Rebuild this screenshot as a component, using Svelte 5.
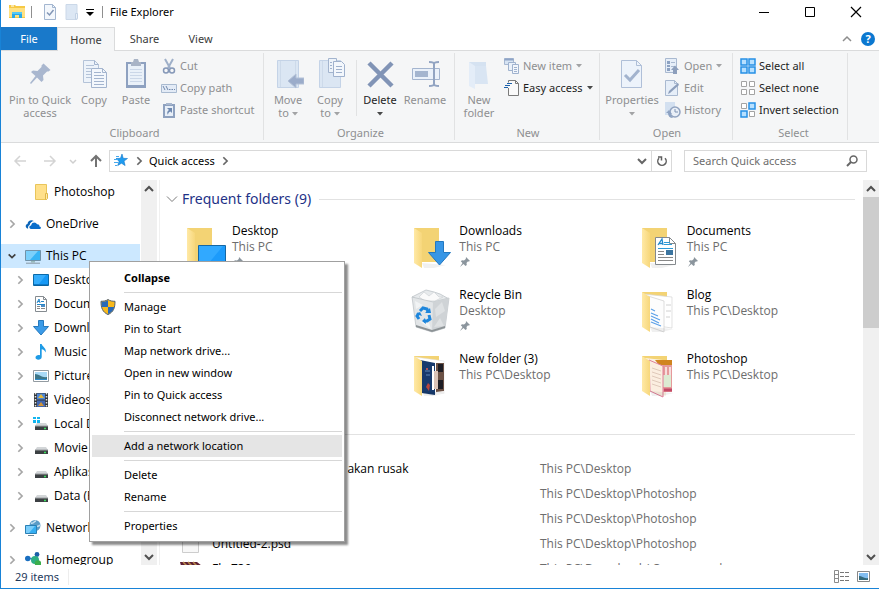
<script>
  const tree = [
    { label: 'Photoshop', icon: 'folder', level: 2, leaf: true },
    { label: 'OneDrive', icon: 'onedrive', level: 1, gap: true },
    { label: 'This PC', icon: 'pc', level: 1, gap: true, selected: true },
    { label: 'Desktop', icon: 'desktop', level: 2 },
    { label: 'Documents', icon: 'document', level: 2 },
    { label: 'Downloads', icon: 'download', level: 2 },
    { label: 'Music', icon: 'music', level: 2 },
    { label: 'Pictures', icon: 'picture', level: 2 },
    { label: 'Videos', icon: 'video', level: 2 },
    { label: 'Local Disk (C:)', icon: 'sysdrive', level: 2 },
    { label: 'Movie (D:)', icon: 'drive', level: 2 },
    { label: 'Aplikasi (E:)', icon: 'drive', level: 2 },
    { label: 'Data (F:)', icon: 'drive', level: 2 },
    { label: 'Network', icon: 'network', level: 1, gap: true },
    { label: 'Homegroup', icon: 'homegroup', level: 1, gap: true }
  ];

  const folders = [
    { name: 'Desktop', place: 'This PC', art: 'desktop', pinned: true },
    { name: 'Downloads', place: 'This PC', art: 'downloads', pinned: true },
    { name: 'Documents', place: 'This PC', art: 'documents', pinned: true },
    { name: 'Pictures', place: 'This PC', art: 'plain', pinned: true },
    { name: 'Recycle Bin', place: 'Desktop', art: 'bin', pinned: true },
    { name: 'Blog', place: 'This PC\\Desktop', art: 'blog' },
    { name: 'Data', place: 'This PC\\Desktop', art: 'plain' },
    { name: 'New folder (3)', place: 'This PC\\Desktop', art: 'photos' },
    { name: 'Photoshop', place: 'This PC\\Desktop', art: 'cards' }
  ];

  const files = [
    { name: 'Jika tidak dirawat, cepat akan rusak', place: 'This PC\\Desktop', art: 'page' },
    { name: 'Untitled-4.psd', place: 'This PC\\Desktop\\Photoshop', art: 'page' },
    { name: 'Untitled-3.psd', place: 'This PC\\Desktop\\Photoshop', art: 'page' },
    { name: 'Untitled-2.psd', place: 'This PC\\Desktop\\Photoshop', art: 'page' },
    { name: 'Fla 730', place: 'This PC\\Downloads\\Compressed', art: 'archive' }
  ];

  const menu = [
    [{ label: 'Collapse', bold: true }],
    [
      { label: 'Manage', shield: true },
      { label: 'Pin to Start' },
      { label: 'Map network drive...' },
      { label: 'Open in new window' },
      { label: 'Pin to Quick access' },
      { label: 'Disconnect network drive...' }
    ],
    [{ label: 'Add a network location', active: true }],
    [{ label: 'Delete' }, { label: 'Rename' }],
    [{ label: 'Properties' }]
  ];
</script>

{#snippet small(name)}
  <svg class="i16" viewBox="0 0 16 16" aria-hidden="true">
    {#if name === 'folder'}
      <path d="M2.5 .5h11v15h-11z" fill="#ffe08a" stroke="#e9c55a" /><path d="M12.5 9.5h2v5l-1 1h-1z" fill="#ffe9a8" stroke="#e0b848" />
    {:else if name === 'onedrive'}
      <path d="M3.200 12.600C.4 12.400-.3 8.800 2.500 8c.2-3 3.800-5.200 6.500-2.800C6.500 5.300 4.800 7 4.700 9c-1.400.5-1.900 2.300-1.500 3.600z" fill="#0a64b8" />
      <path d="M6 13c-2.300-.2-2.200-3.300.1-3.500.1-3.400 4.600-4.300 6-1.200 1.600-.2 2.500.8 2.400 2.100 2 .2 1.900 2.600 0 2.600z" fill="#0a6ecb" />
      <path d="M5.600 9C5.900 5.400 10.500 4.600 12.300 7.600" fill="none" stroke="#fff" stroke-width=".8" />
    {:else if name === 'pc'}
      <path d="M.5 2.500h15v10H.5z" fill="#36b4f5" stroke="#7192a8" /><path d="M1 3h12L5 12H1z" fill="#7bd0fb" /><path d="M6 13h4v1.500H6z" fill="#9bb" /><path d="M1 15.200h14" stroke="#8797a3" />
    {:else if name === 'desktop'}
      <path d="M.5 2.500h15v11H.5z" fill="#1698f5" stroke="#0b6aa8" /><path d="M1 3h12L6 12H1z" fill="#35adfc" /><path d="M1 13h14" stroke="#075b98" />
    {:else if name === 'document'}
      <path d="M2.500.5h8l3 3v12h-11z" fill="#fff" stroke="#858b90" /><path d="M10.500.5v3h3" fill="none" stroke="#858b90" />
      <path d="M4 7l2-4 1 4M4.500 5.500h2M8 5.500h3M4 8.500h8" stroke="#2586c8" fill="none" /><path d="M4 10.500h3M4 12.500h3M8 12.500h4" stroke="#888" /><path d="M8 9h4v2H8z" fill="#4b8dc6" />
    {:else if name === 'download'}
      <path d="M5.500.5h5v6h5L8 15 .5 6.500h5z" fill="#3b9be8" stroke="#2679bd" />
    {:else if name === 'music'}
      <path d="M7 0h1.700c.2 2.600 5.300 4 3.800 8.500-.5-2-2-3-3.800-3.200V13c0 3.300-6.200 3.600-6.200.6 0-2.200 2.700-3.200 4.500-2.300z" fill="#1e9be6" />
    {:else if name === 'picture'}
      <path d="M.5 2.500h15v11H.5z" fill="#fff" stroke="#939ba1" /><path d="M2 4h12v8H2z" fill="#a9daf7" /><path d="M2 6c4 0 7 4 12 3v3H2z" fill="#3d7688" /><path d="M2 11h12v1H2z" fill="#2f8bc9" />
    {:else if name === 'video'}
      <path d="M1 1h14v14H1z" fill="#33363a" /><path d="M2.500 1v14M13.500 1v14" stroke="#dfe3e6" stroke-width="1.500" stroke-dasharray="1.500 1.500" />
      <path d="M4 1.500h8v6H4z" fill="#4d86d6" /><path d="M4 8.500h8V15H4z" fill="#4166b0" /><path d="M5 6l3-4 3 4z" fill="#e0b83a" /><path d="M5 14l3-4 3 4z" fill="#d29539" />
    {:else if name === 'drive' || name === 'sysdrive'}
      <path d="M4 7h9l2 3H2z" fill="#d3d6d8" /><path d="M2 10h13v4H2z" fill="#3c4043" /><path d="M2 10h13" stroke="#9da1a4" /><path d="M11 12.500h2" stroke="#39e05c" stroke-width="1.500" />
      {#if name === 'sysdrive'}<path d="M0 1h3v2H0zM4 1h3v2H4zM0 4h3v3H0zM4 4h3v3H4z" fill="#12b5ef" />{/if}
    {:else if name === 'network'}
      <circle cx="10" cy="5.500" r="5.500" fill="#5b9cc8" /><path d="M6 3c3 1 3-2 5-2M8 9c1-4 5-1 7-4" stroke="#c5dfee" fill="none" stroke-width="1.500" />
      <path d="M.5 5.500h11v8H.5z" fill="#35aef2" stroke="#2a80b5" /><path d="M1 6h9l-6 7H1z" fill="#7acdfb" /><path d="M3 15.500h6" stroke="#6b8799" />
    {:else if name === 'homegroup'}
      <path d="M3 7l7-1 2-4M10 8l3 4" stroke="#2f83cc" fill="none" /><circle cx="2.800" cy="6.500" r="2.800" fill="#1a6fc0" /><circle cx="12" cy="2.500" r="2.400" fill="#1a5fa8" /><circle cx="10" cy="8" r="4" fill="#2cae84" /><circle cx="13" cy="11.500" r="3.200" fill="#3cae4c" />
    {:else if name === 'cut'}
      <path d="M4 1l5 9M12 1L7 10" stroke="#9fb0c9" stroke-width="2" fill="none" /><circle cx="5" cy="12.500" r="2.500" fill="none" stroke="#8598b8" stroke-width="1.500" /><circle cx="11" cy="12.500" r="2.500" fill="none" stroke="#8598b8" stroke-width="1.500" />
    {:else if name === 'path'}
      <path d="M.5 4.500h15v8H.5z" fill="#e3ebf6" stroke="#a9bad0" /><path d="M2 6l2 4M5 6l2 4M8 9.500h1.500M10.500 9.500H12M13 9.500h1" stroke="#7189ad" fill="none" />
    {:else if name === 'shortcut'}
      <path d="M2 2h12v14H2z" fill="#8ea1bf" /><path d="M4 4h8v10H4z" fill="#e8eff8" /><path d="M5 1h6v2H5z" fill="#a9b8cf" /><path d="M6 6h5v5L9.500 9.500Q7 10 7 13 5 10 8 8z" fill="#6f89b0" />
    {:else if name === 'newitem'}
      <path d="M.5.5h9v6h-9z" fill="#d7e4f3" stroke="#a7b8d2" /><path d="M.5 1.500h9" stroke="#8ea4c6" stroke-width="2" /><path d="M4.500 4.500h7v8h-7z" fill="#eaf1fa" stroke="#9fb2ce" /><path d="M8.500 6.500h6v9h-6z" fill="#f2f6fc" stroke="#9fb2ce" /><path d="M10 9.500h3M10 11.500h3M10 13.500h3" stroke="#9fb2ce" />
    {:else if name === 'easy'}
      <path d="M4.500.500h7l3 3v12h-10z" fill="#fafafa" /><path d="M4.500 8v7.500h10v-12l-3-3h-7v2M11.500.5v3h3" fill="none" stroke="#7b7b7b" /><path d="M3 3.500h5M1 5.500h5M0 7.500h4" stroke="#1e62ab" />
    {:else if name === 'open'}
      <path d="M.500.500h11v14h-11z" fill="#e6eef8" stroke="#a9b9d0" /><path d="M2 3h3v3H2zM2 7h3v2H2zM2 10h3v3H2z" fill="#8da2c2" /><path d="M6 4.500h4M6 8.500h4" stroke="#a9b9d0" /><path d="M8 16v-4H6l4-4.500 4 4.500h-2v4z" fill="#8d9fbc" />
    {:else if name === 'edit'}
      <path d="M.500.500h9l3 3v12H.5z" fill="#e6eef8" stroke="#a9b9d0" /><path d="M9.500.5v3h3" fill="none" stroke="#a9b9d0" /><path d="M3 14l1-3 9-8 1 2-9 8z" fill="#8d9fbc" />
    {:else if name === 'history'}
      <path d="M0 0h10v13H0z" fill="#d3e0f0" /><circle cx="10" cy="10" r="5" fill="#e9eff7" stroke="#91a3c0" stroke-width="1.500" /><path d="M10 7v3h3" fill="none" stroke="#7f93b3" /><path d="M1 11l3-3 3 4H5l3 4Q3 16 3 11z" fill="#8da2c2" />
    {:else if name === 'all'}
      <path d="M1 1h6v6H1zM9 1h6v6H9zM1 9h6v6H1zM9 9h6v6H9z" fill="#b7e0ff" stroke="#2690e6" stroke-width="1.500" />
    {:else if name === 'none'}
      <path d="M1.500 1.500h5v5h-5zM9.500 1.500h5v5h-5zM1.500 9.500h5v5h-5zM9.500 9.500h5v5h-5z" fill="#fff" stroke="#a3a3a3" />
    {:else if name === 'invert'}
      <path d="M1.500 1.500h5v5h-5zM9.500 9.500h5v5h-5z" fill="#fff" stroke="#a3a3a3" /><path d="M9 1h6v6H9zM1 9h6v6H1z" fill="#b7e0ff" stroke="#2690e6" stroke-width="1.500" />
    {:else if name === 'explorer'}
      <path d="M0 1h6l1 1h9v12H0z" fill="#f6c945" /><path d="M0 4h16v9H0z" fill="#ffe183" /><path d="M2 2h3" stroke="#fff" /><path d="M3 14V8h10v6h-3v-3H6v3z" fill="#2aa9e8" /><path d="M3 8h10v2H3z" fill="#55c8f5" />
    {:else if name === 'props'}
      <path d="M2.500.500h8l3 3v12h-11z" fill="#f3f7fc" stroke="#a3b6d0" /><path d="M10.500.5v3h3" fill="none" stroke="#a3b6d0" /><path d="M5 8.500l2.500 2.500 4-5" fill="none" stroke="#8296b6" stroke-width="1.500" />
    {:else if name === 'newfolder'}
      <path d="M2 .5h11v15H2z" fill="#dce7f4" stroke="#cbd8e8" /><path d="M11.500 9.500h2v5l-2 1z" fill="#eaf1f9" stroke="#c3d2e5" />
    {:else if name === 'star'}
      <path d="M9 1l1.200 4.300 4.300.2-3.500 2.600 1.100 4.500-3.600-2.400-3.800 2.400 1.400-4.400L3 5.500l4.500-.2z" fill="#1e9cf0" stroke="#1477c9" stroke-width=".6" /><path d="M3 3.500h3M1 6.500h4M1 9.500h4M2 12.500h2" stroke="#47a9ee" />
    {:else if name === 'shield'}
      <path d="M8 .5C6 2 3.500 2.300 1 2.300 1 9 2.500 13 8 15.600 13.500 13 15 9 15 2.300 12.500 2.300 10 2 8 .5z" fill="#f8b91c" stroke="#55606b" /><path d="M8 1.200V8H1.800C1.500 6 1.500 4.500 1.500 2.800 4 2.700 6 2.400 8 1.200zM8 8h6.200c-.7 3.500-2.700 5.600-6.200 7.100z" fill="#2869b8" />
    {/if}
  </svg>
{/snippet}

{#snippet big(name)}
  <svg class="i32" viewBox="0 0 32 32" aria-hidden="true">
    {#if name === 'pin'}
      <path d="M19.500 5.500l7 6.500-2 1.500H23l-4 4 .5 4.500-2 2-4.500-4.500-6 6.500-1-1 5.500-7L7 14l2-1.500 4.500.5 4-4V7.500z" fill="#a9b7cf" />
    {:else if name === 'copy'}
      <path d="M5.500 2.500h11l4 4v18h-15z" fill="#edf3fa" stroke="#b4c3d8" /><path d="M8 7.500h8M8 10.500h5M8 13.500h5M8 16.500h5M8 19.500h5" stroke="#b4c3d8" />
      <path d="M13.500 10.500h11l4 4v15h-15z" fill="#f3f7fc" stroke="#a3b4ce" /><path d="M24.500 10.500v4h4M16.500 2.500v4h4" fill="none" stroke="#a3b4ce" /><path d="M16 14.500h7M16 17.500h10M16 20.500h10M16 23.500h10M16 26.500h10" stroke="#a3b4ce" />
    {:else if name === 'paste'}
      <path d="M6 4h20v26H6z" fill="#8ea1c0" /><path d="M8 6h16v21H8z" fill="#eaf1f9" /><path d="M11 4h2l1-3h4l1 3h2v4H11z" fill="#a9b4c6" /><path d="M10 11.500h12M10 14.500h12M10 17.500h12M10 20.500h12M10 23.500h12" stroke="#cbd7e8" />
    {:else if name === 'move'}
      <path d="M5.500 2.500h21v27h-21z" fill="#dbe6f3" stroke="#c4d3e7" /><path d="M8.500 3v26M23.500 3v26" stroke="#cddaea" /><path d="M16 23l8-7v4h8v6h-8v4z" fill="#9bacca" stroke="#b3c1d7" />
    {:else if name === 'copyto'}
      <path d="M5.500 2.500h21v27h-21z" fill="#dbe6f3" stroke="#c4d3e7" /><path d="M8.500 3v26" stroke="#cddaea" /><path d="M14.500.500h8v14h-8z" fill="#edf3fa" stroke="#a3b4ce" /><path d="M19.500 3.500h8l3 3v12h-11z" fill="#f3f7fc" stroke="#9fb1cd" /><path d="M22 8.500h6M22 11.500h6M22 14.500h6M16 4.500h2M16 7.500h2M16 10.500h2" stroke="#9fb1cd" />
    {:else if name === 'delete'}
      <path d="M5 5l23 23M28 5L5 28" stroke="#8194b6" stroke-width="4.500" />
    {:else if name === 'rename'}
      <path d="M3.500 10.500h27v11h-27z" fill="#eaf1fa" stroke="#a4b5cf" /><path d="M6 13h13v6H6z" fill="#a4b5cf" /><path d="M25 5v23M20 4c3 0 5 .5 5 2 0-1.500 2-2 5-2M20 28c3 0 5-.5 5-2 0 1.500 2 2 5 2" fill="none" stroke="#92a4c2" stroke-width="2" />
    {:else if name === 'folder'}
      <path d="M6 4h17v22H6z" fill="#d5e2f1" /><path d="M6 4l6 4v23l-6-3z" fill="#e4edf8" /><path d="M12 8h11l2 18H12z" fill="#d9e5f3" />
    {:else if name === 'properties'}
      <path d="M5.500 2.500h15l5 5v22h-20z" fill="#edf3fb" stroke="#afbfd8" /><path d="M20.500 2.500v5h5" fill="none" stroke="#afbfd8" /><path d="M9 17l5 5 9-10" fill="none" stroke="#a2b3ce" stroke-width="3" />
    {/if}
  </svg>
{/snippet}

{#snippet art(name)}
  <svg class="i48" viewBox="0 0 48 48" aria-hidden="true">
    <defs>
      <linearGradient id="flap-{name}" x1="0" x2="1"><stop offset="0" stop-color="#ffe9a6" /><stop offset="1" stop-color="#f7d77b" /></linearGradient>
    </defs>
    {#if name === 'bin'}
      <path d="M5 10l8-4 6-3 8 2 6 2 9 5-18 7z" fill="#e7eaec" stroke="#c8cdd1" /><path d="M12 10l5-5 5 4 5-4 5 5 4 0-8 4-10 0z" fill="#fafafa" stroke="#cfd3d6" stroke-width=".7" />
      <path d="M5 10l21 5 16-4-4 30-13 4-16-5z" fill="#e2e5e7" stroke="#b9bfc3" stroke-width=".7" /><path d="M26 15l16-4-4 30-13 4z" fill="#cfd3d6" /><path d="M28 22l7-7 3 9-9 6zM27 40l6-9 4 8z" fill="#dee1e3" /><path d="M8 14l8 4-7 4zM12 34l10 2 2 6z" fill="#f1f3f4" /><path d="M9 38l16 5 13-4v2l-13 4-16-5z" fill="#8d9396" />
      <path d="M13 24l3-3 4 1 1 3M22 28l1 4-3 2h-3M12 32l-2-3 2-3" fill="none" stroke="#1e86dc" stroke-width="3" /><path d="M18 26l6 0-1-5zM18 31l-3 3 4 3zM9 27l4-2 2 4z" fill="#1e86dc" />
    {:else}
      <path d="M7 5h25v34H7z" fill="#f3d374" />
      {#if name === 'photos'}
        <path d="M8 6l29 4v32l-7-1-4 3-11-2z" fill="#fff" stroke="#ddd" stroke-width=".5" /><path d="M13 9l15 3v32l-13-2z" fill="#173a6d" /><path d="M29 12l8 0v28l-8 1z" fill="#6b5145" /><path d="M31 13h5v8h-5zM31 29h5v9h-5z" fill="#1d1d25" /><path d="M26 20h5v18h-5z" fill="#d9c3b8" /><circle cx="20" cy="18" r="1" fill="#e05a52" /><path d="M19 36l2-4 2 2-1 6z" fill="#b7453d" />
        <path d="M18 20h5M19 24h4" stroke="#5f87b8" /><path d="M26 15v24" stroke="#fff" stroke-width="2" />
      {:else if name === 'cards'}
        <path d="M10 7l27 3v30l-6-1v6l-16-5z" fill="#fbf2e3" /><path d="M20 9h17v5H24z" fill="#d08420" /><path d="M28 14h9v27h-9z" fill="#e59a9a" /><path d="M28 24h8v12h-8z" fill="#dcebd2" /><path d="M14 9l14 6v31l-13-6z" fill="#fbeee0" stroke="#df7f99" /><path d="M17 17l9 3M17 21l9 3M17 25l9 3M17 29l9 3M17 33l9 3" stroke="#d8bfb0" stroke-width=".8" /><path d="M31 16v8M35 16v8" stroke="#f6dede" stroke-width="2" /><path d="M29 39h8" stroke="#c24a67" stroke-width="3" />
      {:else if name === 'blog'}
        <path d="M8 7l29 3v31l-7-1-14-2z" fill="#fff" stroke="#d5d5d5" stroke-width=".7" /><path d="M13 9l16 5v31l-14-5z" fill="#fdfdfd" stroke="#cfcfcf" stroke-width=".7" /><path d="M16 22l4 2M16 26l7 3M16 29l9 4M16 32l8 4M16 35l10 4" stroke="#5ba0e8" stroke-width="1.200" /><path d="M31 18h5M31 24h5M31 30h4" stroke="#d0d0d0" />
      {/if}
      <path d="M15 40l24 2-12 3-10 0z" fill="#000" opacity=".06" />
      <path d="M7 5l8 5v35l-8-5z" fill="url(#flap-{name})" />
      {#if name === 'desktop'}
        <path d="M18.500 22.500h27v19h-27z" fill="#1c9bfb" stroke="#1567a4" /><path d="M19 23h24L28 41h-9z" fill="#31a9ff" />
      {:else if name === 'downloads'}
        <path d="M28.500 18.500h8v11h7L32.500 42 21.500 29.500h7z" fill="#3796e6" stroke="#2378c0" />
      {:else if name === 'documents'}
        <path d="M20.500 14.500h14l6 6v21h-20z" fill="#fff" stroke="#84898d" /><path d="M34.500 14.500v6h6" fill="none" stroke="#84898d" /><path d="M23 22l4-6 1 6M24 20.500h4" fill="none" stroke="#2389cc" stroke-width="1.300" /><path d="M29 19.500h6M29 21.500h8M23 25.500h15" stroke="#2f9ad6" /><path d="M23 28.500h6M23 31.500h6M23 34.500h15M23 37.500h15" stroke="#888" /><path d="M31 27h7v5h-7z" fill="#3c75a0" />
      {/if}
    {/if}
  </svg>
{/snippet}

{#snippet chev(dir)}
  <svg class="i12" viewBox="0 0 12 12" aria-hidden="true">
    <path class={dir} d={dir === 'right' ? 'M4 1.500L8.500 6 4 10.500' : dir === 'up' ? 'M2 8L6 4l4 4' : 'M2 4l4 4 4-4'} fill="none" stroke="currentColor" stroke-width="2" />
  </svg>
{/snippet}

{#snippet tri()}<svg class="tri" viewBox="0 0 6 4" aria-hidden="true"><path d="M0 0h6L3 3.500z" fill="currentColor" /></svg>{/snippet}

{#snippet tall(icon, a, b, cls, drop, enabled)}
  <button class="tall {cls}" class:enabled>
    {@render big(icon)}
    <span>{a}</span>
    {#if b || drop}<span>{b}{#if b && drop}&nbsp;{/if}{#if drop}{@render tri()}{/if}</span>{/if}
  </button>
{/snippet}

{#snippet flat(icon, label, drop, enabled)}
  <button class="flat" class:enabled>{@render small(icon)}<span>{label}</span>{#if drop}{@render tri()}{/if}</button>
{/snippet}

<div class="window">
  <header class="titlebar">
    <div class="quick">
      {@render small('explorer')}
      <i class="bar wide"></i>
      <button aria-label="Properties">{@render small('props')}</button>
      <button aria-label="New folder">{@render small('newfolder')}</button>
      <button class="more" aria-label="Customize toolbar"><svg viewBox="0 0 8 8" aria-hidden="true"><path d="M0 .500h8" stroke="#000" /><path d="M0 3h8L4 7z" /></svg></button>
      <i class="bar"></i>
    </div>
    <h1>File Explorer</h1>
    <div class="caption">
      <button aria-label="Minimize"><svg viewBox="0 0 12 12"><path d="M1 6.500h10" stroke="#000" /></svg></button>
      <button aria-label="Maximize"><svg viewBox="0 0 12 12"><path d="M1.500 1.500h9v9h-9z" fill="none" stroke="#000" /></svg></button>
      <button aria-label="Close"><svg viewBox="0 0 12 12"><path d="M1 1l10 10M11 1L1 11" stroke="#000" stroke-width="1.200" /></svg></button>
    </div>
  </header>

  <nav class="tabs" aria-label="Ribbon tabs">
    <button class="file">File</button>
    <button class="current">Home</button>
    <button class="share">Share</button>
    <button class="view">View</button>
    <div class="tabtools">
      <button class="fold" aria-label="Minimize the ribbon"><svg viewBox="0 0 10 10"><path d="M1 7l4-4 4 4" fill="none" stroke="#8d8d8d" stroke-width="1.500" /></svg></button>
      <button class="help" aria-label="Help">?</button>
    </div>
  </nav>

  <section class="ribbon" aria-label="Home">
    <div class="group clipboard">
      <div class="tools">
        {@render tall('pin', 'Pin to Quick', 'access', 'w68')}
        {@render tall('copy', 'Copy', '', 'w40')}
        {@render tall('paste', 'Paste', '', 'w44')}
        <div class="stack">
          {@render flat('cut', 'Cut')}
          {@render flat('path', 'Copy path')}
          {@render flat('shortcut', 'Paste shortcut')}
        </div>
      </div>
      <h2>Clipboard</h2>
    </div>
    <div class="group organize">
      <div class="tools">
        {@render tall('move', 'Move', 'to', 'w42', true)}
        {@render tall('copyto', 'Copy', 'to', 'w42', true)}
        <i class="divider"></i>
        {@render tall('delete', 'Delete', '', 'w42', true, true)}
        {@render tall('rename', 'Rename', '', 'w48')}
      </div>
      <h2>Organize</h2>
    </div>
    <div class="group new">
      <div class="tools">
        {@render tall('folder', 'New', 'folder', 'w44')}
        <div class="stack">
          {@render flat('newitem', 'New item', true)}
          {@render flat('easy', 'Easy access', true, true)}
        </div>
      </div>
      <h2>New</h2>
    </div>
    <div class="group open">
      <div class="tools">
        {@render tall('properties', 'Properties', '', 'w60', true)}
        <div class="stack">
          {@render flat('open', 'Open', true)}
          {@render flat('edit', 'Edit')}
          {@render flat('history', 'History')}
        </div>
      </div>
      <h2>Open</h2>
    </div>
    <div class="group select">
      <div class="tools">
        <div class="stack">
          {@render flat('all', 'Select all', false, true)}
          {@render flat('none', 'Select none', false, true)}
          {@render flat('invert', 'Invert selection', false, true)}
        </div>
      </div>
      <h2>Select</h2>
    </div>
  </section>

  <div class="address">
    <button class="go off" aria-label="Back"><svg viewBox="0 0 14 14"><path d="M7 2L2 7l5 5M2 7h11" /></svg></button>
    <button class="go off" aria-label="Forward"><svg viewBox="0 0 14 14"><path d="M7 2l5 5-5 5M12 7H1" /></svg></button>
    <button class="recent" aria-label="Recent locations"><svg viewBox="0 0 8 8"><path d="M1 3l3 3 3-3" fill="none" stroke="#cfcfcf" stroke-width="1.500" /></svg></button>
    <button class="go up" aria-label="Up"><svg viewBox="0 0 14 14"><path d="M2 7l5-5 5 5M7 2v11" /></svg></button>
    <div class="crumbs">
      {@render small('star')}
      <span class="sep">{@render chev('right')}</span>
      <a href="#quick">Quick access</a>
      <span class="sep">{@render chev('right')}</span>
      <button class="drop" aria-label="Previous locations">{@render chev('down')}</button>
      <button class="refresh" aria-label="Refresh"><svg viewBox="0 0 12 12"><path d="M3 3.200a4.200 4.200 0 1 0 6 0M2 2h3.500v3.500" fill="none" stroke="#5e5e5e" stroke-width="1.500" /></svg></button>
    </div>
    <label class="search">
      <input type="text" placeholder="Search Quick access" aria-label="Search Quick access" />
      <svg viewBox="0 0 12 12" aria-hidden="true"><circle cx="7.500" cy="4.500" r="3.500" fill="none" stroke="#666" stroke-width="1.500" /><path d="M5 7l-4 4" stroke="#666" stroke-width="2" /></svg>
    </label>
  </div>

  <div class="body">
    <nav class="tree" aria-label="Folders">
      {#each tree as item}
        <a href="#{item.icon}" class="node" class:deep={item.level === 2} class:gap={item.gap} class:selected={item.selected}>
          <span class="twist">{#if !item.leaf}{@render chev(item.selected ? 'down' : 'right')}{/if}</span>
          {@render small(item.icon)}
          <span>{item.label}</span>
        </a>
      {/each}
    </nav>
    <div class="scroll">
      <button aria-label="Scroll up">{@render chev('up')}</button>
      <button aria-label="Scroll down">{@render chev('down')}</button>
    </div>

    <main>
      <h2 class="head"><svg viewBox="0 0 12 12" aria-hidden="true"><path d="M1 3.500l5 5 5-5" fill="none" stroke="#7b7b7b" /></svg>Frequent folders (9)</h2>
      <div class="tiles">
        {#each folders as f}
          <a class="tile" href="#folder">
            {@render art(f.art)}
            <span class="info">
              <span>{f.name}</span>
              <span class="dim">{f.place}</span>
              {#if f.pinned}<svg class="pinned" viewBox="0 0 12 12" aria-hidden="true"><path d="M7 1l4 4-1.200.5-1 0-1.300 1.500.3 2L6.500 10 4.500 8 1 11l2.500-4L1.800 5.200 3 4.300l2 .2L6.800 3z" fill="#8b959d" /></svg>{/if}
            </span>
          </a>
        {/each}
      </div>
      <h2 class="head"><svg viewBox="0 0 12 12" aria-hidden="true"><path d="M1 3.500l5 5 5-5" fill="none" stroke="#7b7b7b" /></svg>Recent files (20)</h2>
      <ul class="files">
        {#each files as f}
          <li>
            {#if f.art === 'archive'}
              <svg viewBox="0 0 22 22" aria-hidden="true"><path d="M0 4h17l5 4v12H4z" fill="#5d1f35" /><path d="M3 4l4 4M8 4l4 4M13 4l4 4" stroke="#b98a4a" stroke-width="1.500" /></svg>
            {:else}
              <svg viewBox="0 0 22 22" aria-hidden="true"><path d="M2.500 1.500h16v18h-16z" fill="#f8f8f8" stroke="#cdcdcd" /></svg>
            {/if}
            <span>{f.name}</span>
            <span class="dim">{f.place}</span>
          </li>
        {/each}
      </ul>
    </main>
    <div class="scroll">
      <button aria-label="Scroll up">{@render chev('up')}</button>
      <i class="thumb"></i>
      <button aria-label="Scroll down">{@render chev('down')}</button>
    </div>
  </div>

  <footer>
    <span class="count">29 items</span>
    <div class="views">
      <button aria-label="Details"><svg viewBox="0 0 16 14"><path d="M.5.500h4v12h-4zM.5 4.500h4M.5 8.500h4" fill="#fff" stroke="#8b8b8b" /><path d="M6 2.500h4M11 2.500h4M6 6.500h4M11 6.500h4M6 10.500h4M11 10.500h4" stroke="#777" /></svg></button>
      <button aria-label="Large icons"><svg viewBox="0 0 16 14"><path d="M1.500 1.500h12v10h-12z" fill="#fff" stroke="#888" /><path d="M3 3h9v7H3z" fill="#82bdf0" /><path d="M3 6c3 0 5 3 9 2v2H3z" fill="#33697a" /></svg></button>
    </div>
  </footer>

  <div class="menu" role="menu">
    {#each menu as section, n}
      {#if n}<hr />{/if}
      {#each section as item}
        <button role="menuitem" class:bold={item.bold} class:active={item.active}>
          <span class="slot">{#if item.shield}{@render small('shield')}{/if}</span>{item.label}
        </button>
      {/each}
    {/each}
  </div>
</div>

<style>
  :global(body) { margin: 0; }
  .window {
    position: relative;
    display: flex;
    flex-direction: column;
    box-sizing: border-box;
    height: 100vh;
    overflow: hidden;
    border: solid #1883d7;
    border-width: 0 0 1px 1px;
    background: #fff;
    color: #000;
    font: 11px/16px 'Noto Sans', 'Open Sans', sans-serif;
  }
  .window :global(*) { box-sizing: border-box; }
  button { margin: 0; padding: 0; border: 0; background: none; color: inherit; font: inherit; white-space: nowrap; }
  a { color: inherit; text-decoration: none; white-space: nowrap; }
  h1, h2 { margin: 0; font: inherit; }
  svg { display: block; flex: none; }
  .i16 { width: 16px; height: 16px; }
  .i32 { width: 32px; height: 32px; }
  .i48 { width: 48px; height: 48px; }
  .i12 { width: 12px; height: 12px; }
  .tri { display: inline-block; width: 6px; height: 4px; vertical-align: middle; opacity: .8; }

  .titlebar { display: flex; flex: none; height: 27px; padding-left: 8px; }
  .quick { display: flex; align-items: center; height: 24px; gap: 6px; }
  .bar { width: 1px; height: 12px; background: #8f8f8f; }
  .bar.wide { margin-right: 4px; }
  .quick .more svg { width: 8px; height: 8px; }
  .quick .more { padding: 2px 2px 0 0; }
  h1 { padding-left: 7px; line-height: 24px; }
  .caption { display: flex; height: 24px; margin-left: auto; }
  .caption button { display: grid; place-items: center; width: 46px; }
  .caption svg { width: 12px; height: 12px; }

  .tabs { display: flex; flex: none; height: 24px; border-bottom: 1px solid #dadbdc; color: #3b3b3b; }
  .tabs .file { width: 56px; height: 23px; background: #1979ca; color: #fff; }
  .tabs .current { width: 58px; height: 24px; border: 1px solid #dadbdc; border-bottom: 0; background: #f5f6f7; }
  .tabs .share { width: 59px; }
  .tabs .view { width: 53px; }
  .tabtools { display: flex; align-items: center; gap: 9px; margin-left: auto; padding-right: 4px; }
  .fold svg { width: 10px; height: 10px; }
  .help { width: 14px; height: 14px; border-radius: 7px; background: #0b78d0; color: #fff; font-weight: 700; line-height: 14px; }

  .ribbon { display: flex; flex: none; height: 92px; border-bottom: 1px solid #dadbdc; background: #f5f6f7; color: #8e8f91; }
  .group { display: flex; flex-direction: column; margin: 2px 0; padding-top: 2px; border-right: 1px solid #e1e2e3; }
  .group h2 { text-align: center; }
  .tools { display: flex; flex: none; height: 70px; }
  .clipboard { width: 263px; padding-left: 5px; }
  .organize { width: 191px; padding-left: 3px; }
  .new { width: 145px; padding-left: 2px; }
  .open { width: 133px; padding-left: 2px; }
  .select { width: 115px; padding-left: 7px; }
  .stack { display: flex; flex-direction: column; padding-left: 3px; }
  .select .stack { padding-left: 0; }
  .flat { display: flex; align-items: center; gap: 3px; height: 22px; }
  .flat .tri { margin-left: 1px; }
  .tall { display: flex; flex-direction: column; align-items: center; padding-top: 3px; line-height: 13px; }
  .tall .i32 { margin-bottom: 3px; }
  .tall span { display: block; }
  .w40 { width: 40px; }
  .w42 { width: 42px; }
  .w44 { width: 44px; }
  .w48 { width: 48px; }
  .w60 { width: 60px; }
  .w68 { width: 68px; }
  .enabled { color: #1e1e1e; }
  .divider { width: 1px; height: 56px; margin: 5px 2px 0 5px; background: #e1e2e3; }

  .address { display: flex; flex: none; align-items: center; height: 37px; padding: 0 12px 2px; }
  .go { padding: 0 8px; }
  .go svg { width: 14px; height: 14px; fill: none; stroke: #737373; stroke-width: 2; }
  .off svg { stroke: #d4d4d4; stroke-width: 1.5; }
  .address > .go:first-child { padding-left: 0; }
  .recent { padding: 0 4px; }
  .go.up { padding-right: 6px; }
  .recent svg { width: 8px; height: 8px; }
  .crumbs { display: flex; flex: 1; align-items: center; height: 22px; padding-left: 3px; border: 1px solid #d9d9d9; }
  .crumbs .sep { padding: 0 4px; color: #666; }
  .sep .i12, .twist .i12 { width: 12px; height: 10px; }
  .drop { margin-left: auto; padding: 0 3px; color: #666; }
  .refresh { display: grid; place-items: center; width: 20px; height: 20px; border-left: 1px solid #d9d9d9; }
  .refresh svg { width: 12px; height: 12px; }
  .search { display: flex; align-items: center; width: 183px; height: 22px; margin-left: 12px; padding: 0 8px; border: 1px solid #d9d9d9; }
  .search input { flex: 1; min-width: 0; padding: 0; border: 0; outline: 0; background: none; font: inherit; }
  .search input::placeholder { color: #6d6d6d; opacity: 1; }
  .search svg { width: 12px; height: 12px; }

  .body { display: flex; flex: 1; min-height: 0; font: 12px/16px 'Open Sans', 'Noto Sans', sans-serif; }
  .tree { display: flex; flex-direction: column; width: 139px; overflow: hidden; }
  .node { display: flex; flex: none; align-items: center; gap: 5px; height: 24px; padding-left: 3px; }
  .node.deep { padding-left: 11px; }
  .node.gap { margin-top: 8px; }
  .node.selected { background: #cce8ff; }
  .twist { display: grid; place-items: center; width: 16px; color: #a6a6a6; }
  .selected .twist { color: #404040; }
  .scroll { display: flex; flex: none; flex-direction: column; width: 16px; margin-left: 1px; background: #f0f0f0; color: #505050; }
  .scroll button { display: grid; place-items: center; height: 17px; }
  .scroll button:last-child { margin-top: auto; }
  .thumb { height: 131px; background: #cdcdcd; }
  main { flex: 1; min-width: 0; margin-left: 2px; padding-top: 8px; border-left: 1px solid #f0f0f0; overflow: hidden; }
  .head { display: flex; align-items: center; gap: 4px; height: 22px; margin: 0 7px 11px 6px; color: #1e3287; font: 14px/20px 'Noto Sans', 'Open Sans', sans-serif; white-space: nowrap; }
  .head svg { width: 12px; height: 12px; }
  .head::after { content: ''; flex: 1; height: 1px; margin-left: 4px; background: #e2e2e2; }
  .tiles { display: grid; grid-template-columns: repeat(auto-fill, minmax(220px, 1fr)); padding: 2px 0 8px 20px; }
  .tile { display: flex; gap: 4px; height: 64px; }
  .info { display: flex; flex-direction: column; }
  .dim { color: #6d6d6d; }
  .pinned { width: 12px; height: 12px; margin-top: 1px; }
  .files { margin: 0; padding: 0 0 0 20px; list-style: none; }
  .files li { display: grid; grid-template-columns: 22px 318px 1fr; align-items: center; gap: 10px; height: 25px; white-space: nowrap; }
  .files svg { width: 22px; height: 22px; }

  footer { display: flex; flex: none; align-items: center; justify-content: space-between; height: 23px; padding: 0 7px 0 14px; color: #1e395b; }
  .count { padding-right: 9px; border-right: 1px solid #ededed; }
  .views { display: flex; gap: 6px; }
  .views svg { width: 16px; height: 14px; }

  .menu {
    position: absolute;
    top: 261px;
    left: 88px;
    display: flex;
    flex-direction: column;
    width: 256px;
    padding: 5px 2px 4px;
    border: 1px solid #a0a0a0;
    background: #fff;
    box-shadow: 3px 3px 2px rgba(0, 0, 0, .45);
  }
  .menu button { display: flex; align-items: center; height: 22px; text-align: left; }
  .menu .slot { width: 32px; padding-left: 8px; }
  .menu .bold { font-weight: 700; }
  .menu .active { background: #e5e5e5; }
  .menu hr { align-self: stretch; height: 1px; margin: 3px 0 3px 32px; border: 0; background: #d7d7d7; }
</style>
